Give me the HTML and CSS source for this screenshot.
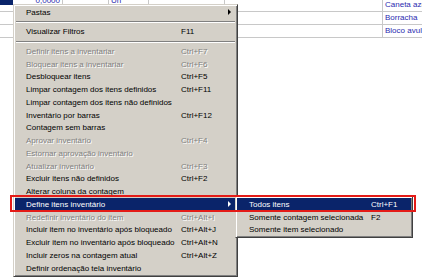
FILE: index.html
```html
<!DOCTYPE html>
<html>
<head>
	<title>Inventário</title>
	<link rel="stylesheet" href="styles.css">
</head>
<body>
	<div class="sheet">
		<div class="pane left">
			<div class="strip">
				<div class="cell sel"></div>
				<div class="cell num">0,0000</div>
				<div class="cell w46"></div>
				<div class="cell w40">Un</div>
				<div class="cell w76"></div>
			</div>
			<div class="row first"></div>
			<div class="row"></div>
			<div class="row"></div>
		</div>
		<div class="pane right">
			<div class="row top">Caneta azul</div>
			<div class="row">Borracha</div>
			<div class="row">Bloco avulso</div>
		</div>
	</div>

	<div class="menu main">
		<div class="item"><span class="label">Pastas</span><span class="arrow"></span></div>
		<div class="sep"></div>
		<div class="item"><span class="label">Visualizar Filtros</span><span class="key">F11</span></div>
		<div class="sep"></div>
		<div class="item off"><span class="label">Definir itens a inventariar</span><span class="key">Ctrl+F7</span></div>
		<div class="item off"><span class="label">Bloquear itens a inventariar</span><span class="key">Ctrl+F6</span></div>
		<div class="item"><span class="label">Desbloquear itens</span><span class="key">Ctrl+F5</span></div>
		<div class="item"><span class="label">Limpar contagem dos itens definidos</span><span class="key">Ctrl+F11</span></div>
		<div class="item"><span class="label">Limpar contagem dos itens não definidos</span></div>
		<div class="item"><span class="label">Inventário por barras</span><span class="key">Ctrl+F12</span></div>
		<div class="item"><span class="label">Contagem sem barras</span></div>
		<div class="item off"><span class="label">Aprovar inventário</span><span class="key">Ctrl+F4</span></div>
		<div class="item off"><span class="label">Estornar aprovação inventário</span></div>
		<div class="item off"><span class="label">Atualizar inventário</span><span class="key">Ctrl+F3</span></div>
		<div class="item"><span class="label">Excluir itens não definidos</span><span class="key">Ctrl+F2</span></div>
		<div class="item"><span class="label">Alterar coluna da contagem</span></div>
		<div class="item active"><span class="label">Define itens inventário</span><span class="arrow"></span></div>
		<div class="item off"><span class="label">Redefinir inventário do item</span><span class="key">Ctrl+Alt+I</span></div>
		<div class="item"><span class="label">Incluir item no inventário após bloqueado</span><span class="key">Ctrl+Alt+J</span></div>
		<div class="item"><span class="label">Excluir item no inventário após bloqueado</span><span class="key">Ctrl+Alt+N</span></div>
		<div class="item"><span class="label">Incluir zeros na contagem atual</span><span class="key">Ctrl+Alt+Z</span></div>
		<div class="item"><span class="label">Definir ordenação tela inventário</span></div>
	</div>

	<div class="menu submenu">
		<div class="item active"><span class="label">Todos itens</span><span class="key">Ctrl+F1</span></div>
		<div class="item"><span class="label">Somente contagem selecionada</span><span class="key">F2</span></div>
		<div class="item"><span class="label">Somente item selecionado</span></div>
	</div>

	<div class="mark"></div>
</body>
</html>
```

FILE: styles.css
```css
body {
	margin: 0;
	width: 422px;
	height: 279px;
	overflow: hidden;
	background: #fff;
	font-family: "Liberation Sans", Arial, sans-serif;
	font-size: 8px;
	position: relative;
}

/* grid behind the menu */
.sheet {
	display: flex;
}

.pane.left {
	width: 382px;
}

.pane.right {
	flex: 1;
	border-left: 1px solid #c8c8c8;
	overflow: hidden;
	white-space: nowrap;
}

.strip {
	display: flex;
	height: 5px;
	overflow: hidden;
}

.cell {
	height: 5px;
	line-height: 0;
	padding-top: 1px;
	color: #2b2bb0;
	border-right: 1px solid #c8c8c8;
	box-sizing: border-box;
	overflow: hidden;
}

.cell.sel {
	width: 13px;
	background: #0a246a;
	border-right: none;
}

.cell.num {
	width: 50px;
	text-align: right;
	padding-right: 2px;
}

.w46 { width: 46px; }
.w40 { width: 40px; padding-left: 2px; }
.w76 { width: 76px; }

.row {
	height: 12px;
	border-bottom: 1px solid #c8c8c8;
}

.row.first {
	height: 6px;
}

.right .row {
	color: #2b2bb0;
	line-height: 12px;
	padding-left: 2px;
}

.right .row.top {
	height: 11px;
	line-height: 10px;
}

/* popup menus */
.menu {
	position: absolute;
	background: #d4d0c8;
	border: 1px solid;
	border-color: #d4d0c8 #404040 #404040 #d4d0c8;
	box-shadow: inset 1px 1px 0 #fff, inset -1px -1px 0 #808080;
	padding: 1px;
	color: #000;
}

.main {
	left: 13px;
	top: 4px;
	width: 225px;
	box-sizing: border-box;
}

.submenu {
	left: 235px;
	top: 196px;
	width: 178px;
	box-sizing: border-box;
}

.item {
	display: flex;
	align-items: center;
	height: 12.75px;
	padding-left: 11px;
	white-space: nowrap;
}

.main .label {
	width: 155px;
	flex: none;
}

.submenu .item {
	padding-left: 12px;
}

.submenu .label {
	width: 122px;
	flex: none;
}

.item.off {
	color: #808080;
	text-shadow: 1px 1px 0 #fff;
}

.item.active {
	background: #0a246a;
	color: #fff;
}

.arrow {
	margin-left: auto;
	margin-right: 5px;
	width: 0;
	height: 0;
	border-top: 3px solid transparent;
	border-bottom: 3px solid transparent;
	border-left: 3px solid #000;
}

.item.active .arrow {
	border-left-color: #fff;
}

.sep {
	height: 6.75px;
	display: flex;
	flex-direction: column;
	justify-content: center;
}

.sep::before {
	content: "";
	display: block;
	margin: 0 1px;
	border-top: 1px solid #808080;
	border-bottom: 1px solid #fff;
}

/* red highlight drawn over the screenshot */
.mark {
	position: absolute;
	left: 10px;
	top: 195px;
	width: 406px;
	height: 17px;
	box-sizing: border-box;
	border: 2px solid #e41b17;
}
```
